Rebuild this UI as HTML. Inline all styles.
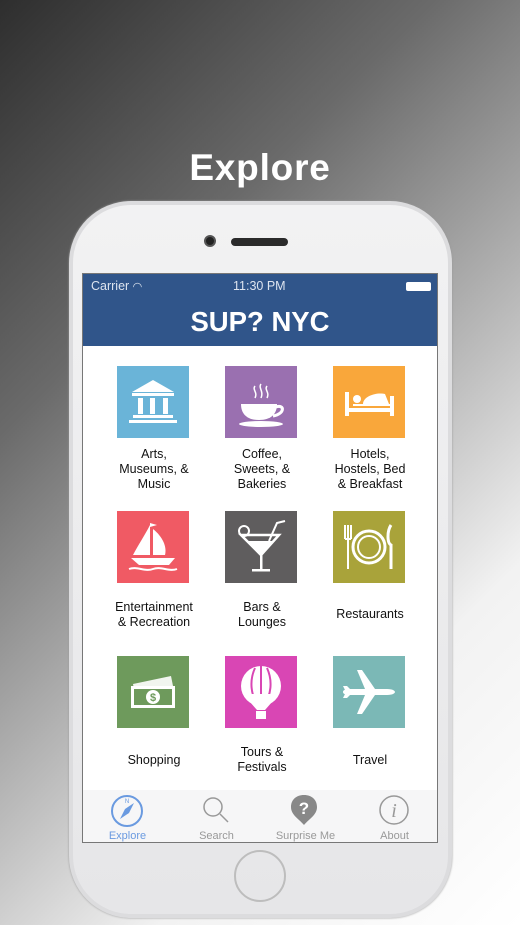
<!DOCTYPE html>
<html><head><meta charset="utf-8"><style>
*{margin:0;padding:0;box-sizing:border-box}
body{width:520px;height:925px;overflow:hidden;position:relative;font-family:"Liberation Sans",sans-serif;
background:linear-gradient(135deg,#2e2e2e 0%,#6a6a6a 30%,#b5b5b5 55%,#f2f2f2 75%,#fff 100%)}
.title{position:absolute;top:147px;left:0;width:520px;text-align:center;color:#fff;font-weight:bold;font-size:37px;letter-spacing:0.8px}
.phone{position:absolute;left:69px;top:201px;width:383px;height:717px;border-radius:62px;background:#dcdcde;padding:4px;box-shadow:0 0 2px #999}
.face{width:100%;height:100%;border-radius:58px;background:linear-gradient(#f2f2f3,#e6e6e8);position:relative}
.cam{position:absolute;left:131px;top:30px;width:12px;height:12px;border-radius:50%;background:#222;border:2px solid #555}
.spk{position:absolute;left:158px;top:33px;width:57px;height:8px;border-radius:4px;background:#2b2b2b}
.home{position:absolute;left:161px;top:645px;width:52px;height:52px;border-radius:50%;border:2px solid #bdbdbd}
.screen{position:absolute;left:82px;top:273px;width:356px;height:570px;background:#fff;border:1px solid #777;overflow:hidden}
.hdr{height:72px;background:#30558a;color:#fff;position:relative}
.sb{position:absolute;top:5px;font-size:12.5px;color:#dde4ef}
.nt{position:absolute;top:32px;width:100%;text-align:center;font-weight:bold;font-size:27.5px}
.ic{position:absolute;width:72px;height:72px}
.ic svg{width:72px;height:72px}
.lb{position:absolute;width:110px;text-align:center;font-size:12.5px;line-height:15px;color:#111}
.tab{position:absolute;left:0;top:516px;width:356px;height:54px;background:#f6f6f7}
.t{position:absolute;top:40px;font-size:11px;color:#999;width:89px;text-align:center}
</style></head><body>
<div class="title">Explore</div>
<div class="phone"><div class="face"><div class="cam"></div><div class="spk"></div><div class="home"></div></div></div>
<div class="screen">
<div class="hdr">
<span class="sb" style="left:8px">Carrier <span style="font-size:11px">&#x25E0;</span></span>
<span class="sb" style="left:150px">11:30 PM</span>
<span style="position:absolute;right:6px;top:8px;width:25px;height:9px;border-radius:2px;background:#fff"></span>
<div class="nt">SUP? NYC</div>
</div>

<div class="ic" style="left:34px;top:92px;background:#6ab4d8"><svg viewBox="0 0 72 72" fill="#fff"><path d="M15 26 L36 14 L57 26Z"/><rect x="15" y="27" width="42" height="3"/><rect x="21" y="32" width="5" height="16"/><rect x="33" y="32" width="5" height="16"/><rect x="46" y="32" width="5" height="16"/><rect x="16" y="49" width="40" height="3"/><rect x="12" y="54" width="48" height="3"/></svg></div>
<div class="ic" style="left:142px;top:92px;background:#9a70b0"><svg viewBox="0 0 72 72" fill="#fff"><path d="M16 38 H52 C52 48 46 54 34 54 C22 54 16 48 16 38Z"/><path d="M51 41 C60 38 60 48 48 50" stroke="#fff" stroke-width="3" fill="none"/><ellipse cx="36" cy="58" rx="22" ry="3"/><path d="M30 20 c-3 4 3 6 0 12 M36 18 c-3 4 3 7 0 14 M42 20 c-3 4 3 6 0 12" stroke="#fff" stroke-width="1.5" fill="none"/></svg></div>
<div class="ic" style="left:250px;top:92px;background:#f9a73b"><svg viewBox="0 0 72 72" fill="#fff"><rect x="12" y="26" width="4" height="24"/><rect x="57" y="30" width="4" height="20"/><rect x="12" y="42" width="49" height="4"/><circle cx="24" cy="33" r="4"/><path d="M20 38 H58 V40 H20Z"/><path d="M30 38 C30 30 44 26 52 28 L56 38Z"/></svg></div>

<div class="ic" style="left:34px;top:237px;background:#f05a64"><svg viewBox="0 0 72 72" fill="#fff"><path d="M33 14 V44 H16 C20 36 28 24 33 14Z"/><path d="M36 18 C46 26 50 36 48 44 H36Z"/><path d="M33 12 L40 14 L33 16Z"/><path d="M14 47 H58 L52 54 H22Z"/><path d="M12 58 C20 55 28 61 36 58 C44 55 52 61 60 58" stroke="#fff" stroke-width="2" fill="none"/></svg></div>
<div class="ic" style="left:142px;top:237px;background:#5f5d5e"><svg viewBox="0 0 72 72" fill="#fff" stroke="#fff"><path d="M16 24 H54 L36 44Z" fill="none" stroke-width="2.5"/><path d="M22 30 H50 L36 44Z" stroke="none"/><rect x="35" y="44" width="2.5" height="14" stroke="none"/><rect x="27" y="58" width="18" height="2.5" stroke="none"/><circle cx="19" cy="20" r="5" fill="none" stroke-width="2"/><path d="M44 30 L52 12 L60 10" fill="none" stroke-width="2"/></svg></div>
<div class="ic" style="left:250px;top:237px;background:#a9a33a"><svg viewBox="0 0 72 72" fill="none" stroke="#fff"><circle cx="36" cy="36" r="16" stroke-width="3"/><circle cx="36" cy="36" r="11" stroke-width="2"/><path d="M12 14 V28 M15 14 V28 M18 14 V28 M12 28 H18 M15 28 V58" stroke-width="2"/><path d="M58 14 C54 20 54 32 58 34 V58" stroke-width="3"/></svg></div>

<div class="ic" style="left:34px;top:382px;background:#6e9a5c"><svg viewBox="0 0 72 72" fill="#fff"><path d="M16 28 L54 20 L58 40 L20 48Z" opacity=".9"/><rect x="14" y="30" width="44" height="22" fill="#fff"/><rect x="17" y="33" width="38" height="16" fill="#6e9a5c"/><circle cx="36" cy="41" r="7" fill="#fff"/><text x="36" y="45" font-size="11" text-anchor="middle" fill="#6e9a5c" font-family="Liberation Sans" font-weight="bold">$</text></svg></div>
<div class="ic" style="left:142px;top:382px;background:#d946b4"><svg viewBox="0 0 72 72" fill="#fff"><ellipse cx="36" cy="30" rx="20" ry="20"/><path d="M30 12 C24 25 26 40 33 48 M42 12 C48 25 46 40 39 48 M36 10 V48" stroke="#d946b4" stroke-width="2" fill="none"/><path d="M18 38 L32 54 H40 L54 38Z"/><rect x="31" y="55" width="10" height="8"/></svg></div>
<div class="ic" style="left:250px;top:382px;background:#7bb8b6"><svg viewBox="0 0 72 72" fill="#fff"><path d="M10 36 C10 33 16 33 20 33 L32 33 L24 14 H29 L42 33 H54 C60 33 62 35 62 36 C62 37 60 39 54 39 H42 L29 58 H24 L32 39 H20 C16 39 10 39 10 36Z"/><path d="M10 30 H14 L18 34 H12Z M10 42 H14 L18 38 H12Z"/></svg></div>

<div class="lb" style="left:16px;top:173px">Arts,<br>Museums, &amp;<br>Music</div>
<div class="lb" style="left:124px;top:173px">Coffee,<br>Sweets, &amp;<br>Bakeries</div>
<div class="lb" style="left:232px;top:173px">Hotels,<br>Hostels, Bed<br>&amp; Breakfast</div>
<div class="lb" style="left:16px;top:326px">Entertainment<br>&amp; Recreation</div>
<div class="lb" style="left:124px;top:326px">Bars &amp;<br>Lounges</div>
<div class="lb" style="left:232px;top:333px">Restaurants</div>
<div class="lb" style="left:16px;top:479px">Shopping</div>
<div class="lb" style="left:124px;top:471px">Tours &amp;<br>Festivals</div>
<div class="lb" style="left:232px;top:479px">Travel</div>

<div class="tab">
<svg style="position:absolute;left:27px;top:4px" width="34" height="34" viewBox="0 0 34 34"><circle cx="17" cy="17" r="15" fill="none" stroke="#6a9ae0" stroke-width="2"/><path d="M24 9 L19 19 L15 15Z M10 25 L15 15 L19 19Z" fill="#6a9ae0"/><text x="17" y="9" font-size="6" fill="#6a9ae0" text-anchor="middle" font-family="Liberation Sans">N</text></svg>
<svg style="position:absolute;left:117px;top:4px" width="32" height="32" viewBox="0 0 32 32" fill="none" stroke="#999" stroke-width="1.5"><circle cx="13" cy="13" r="9"/><path d="M20 20 L28 28"/></svg>
<svg style="position:absolute;left:206px;top:3px" width="30" height="34" viewBox="0 0 30 34"><path d="M15 2 C23 2 28 7 28 14 C28 22 20 26 15 32 C10 26 2 22 2 14 C2 7 7 2 15 2Z" fill="#888"/><text x="15" y="21" font-size="17" font-weight="bold" fill="#fff" text-anchor="middle" font-family="Liberation Sans">?</text></svg>
<svg style="position:absolute;left:295px;top:4px" width="32" height="32" viewBox="0 0 32 32"><circle cx="16" cy="16" r="14" fill="none" stroke="#999" stroke-width="1.5"/><text x="16" y="23" font-size="20" font-style="italic" fill="#999" text-anchor="middle" font-family="Liberation Serif">i</text></svg>
<div class="t" style="left:0;color:#6a9ae0">Explore</div>
<div class="t" style="left:89px">Search</div>
<div class="t" style="left:178px">Surprise Me</div>
<div class="t" style="left:267px">About</div>
</div>
</div>
</body></html>
